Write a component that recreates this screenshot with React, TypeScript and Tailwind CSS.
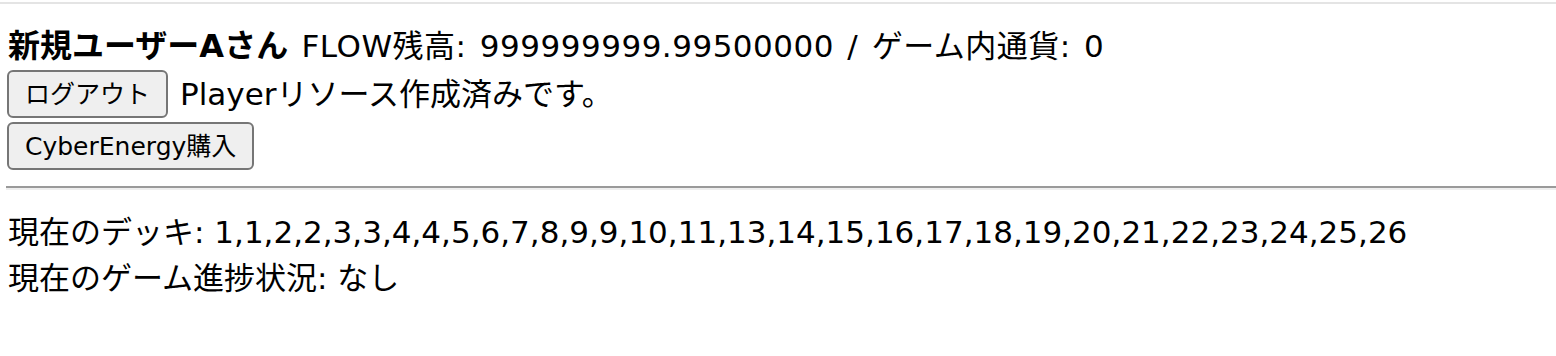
import React from "react";

const deck = [1, 1, 2, 2, 3, 3, 4, 4, 5, 6, 7, 8, 9, 9, 10, 11, 13, 14, 15, 16, 17, 18, 19, 20, 21, 22, 23, 24, 25, 26];

function Btn({ children }: { children: React.ReactNode }) {
  return (
    <button className="h-[48px] px-[16px] bg-[#efefef] border-2 border-[#767676] rounded-[6px] text-[25px] text-black leading-none">
      {children}
    </button>
  );
}

export default function App() {
  return (
    <div
      className="min-h-screen bg-white text-black text-[31px]"
      style={{ fontFamily: '"DejaVu Sans", "Noto Sans CJK JP", sans-serif' }}
    >
      <div className="h-[2px] mt-[2px] bg-[#e4e4e4]" />

      {/* account header */}
      <div className="pl-[8px] pt-[18px] h-[66px] flex items-center whitespace-nowrap">
        <b className="font-bold text-[32px]">新規ユーザーAさん</b>
        <span className="tracking-[0.5px] [word-spacing:3px]">&nbsp;FLOW残高: 999999999.99500000 / ゲーム内通貨: 0</span>
      </div>

      <div className="pl-[7px] flex flex-col gap-[4px]">
        <div className="flex items-center gap-[12px]">
          <Btn>ログアウト</Btn>
          <span>Playerリソース作成済みです。</span>
        </div>
        <div className="flex">
          <Btn>CyberEnergy購入</Btn>
        </div>
      </div>

      <hr className="ml-[6px] mt-[16px] border-t-2 border-t-[#9a9a9a] border-b-2 border-b-[#eeeeee]" />

      {/* game state */}
      <div className="pl-[8px] pt-[19px]">
        <div className="h-[46px] flex items-center whitespace-nowrap">現在のデッキ: {deck.join(",")}</div>
        <div className="h-[46px] flex items-center whitespace-nowrap">現在のゲーム進捗状況: なし</div>
      </div>
    </div>
  );
}
